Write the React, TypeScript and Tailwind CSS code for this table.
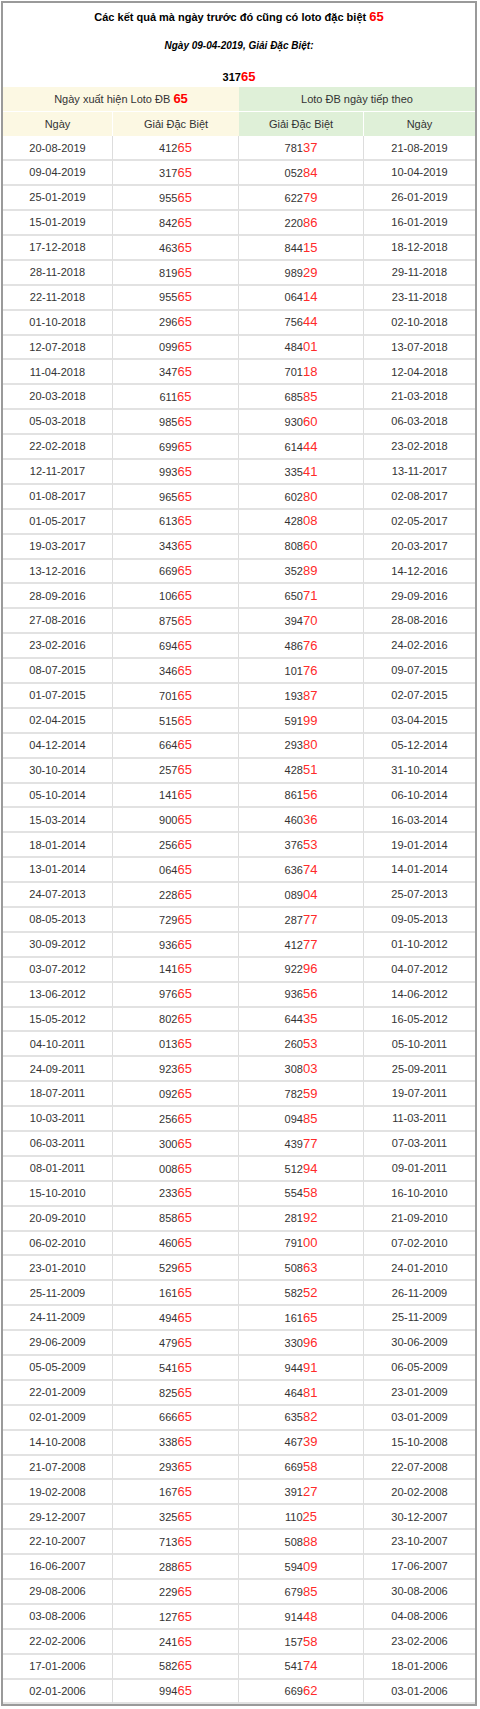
const rows: [string, string, string, string][] = [
  ["20-08-2019", "41265", "78137", "21-08-2019"],
  ["09-04-2019", "31765", "05284", "10-04-2019"],
  ["25-01-2019", "95565", "62279", "26-01-2019"],
  ["15-01-2019", "84265", "22086", "16-01-2019"],
  ["17-12-2018", "46365", "84415", "18-12-2018"],
  ["28-11-2018", "81965", "98929", "29-11-2018"],
  ["22-11-2018", "95565", "06414", "23-11-2018"],
  ["01-10-2018", "29665", "75644", "02-10-2018"],
  ["12-07-2018", "09965", "48401", "13-07-2018"],
  ["11-04-2018", "34765", "70118", "12-04-2018"],
  ["20-03-2018", "61165", "68585", "21-03-2018"],
  ["05-03-2018", "98565", "93060", "06-03-2018"],
  ["22-02-2018", "69965", "61444", "23-02-2018"],
  ["12-11-2017", "99365", "33541", "13-11-2017"],
  ["01-08-2017", "96565", "60280", "02-08-2017"],
  ["01-05-2017", "61365", "42808", "02-05-2017"],
  ["19-03-2017", "34365", "80860", "20-03-2017"],
  ["13-12-2016", "66965", "35289", "14-12-2016"],
  ["28-09-2016", "10665", "65071", "29-09-2016"],
  ["27-08-2016", "87565", "39470", "28-08-2016"],
  ["23-02-2016", "69465", "48676", "24-02-2016"],
  ["08-07-2015", "34665", "10176", "09-07-2015"],
  ["01-07-2015", "70165", "19387", "02-07-2015"],
  ["02-04-2015", "51565", "59199", "03-04-2015"],
  ["04-12-2014", "66465", "29380", "05-12-2014"],
  ["30-10-2014", "25765", "42851", "31-10-2014"],
  ["05-10-2014", "14165", "86156", "06-10-2014"],
  ["15-03-2014", "90065", "46036", "16-03-2014"],
  ["18-01-2014", "25665", "37653", "19-01-2014"],
  ["13-01-2014", "06465", "63674", "14-01-2014"],
  ["24-07-2013", "22865", "08904", "25-07-2013"],
  ["08-05-2013", "72965", "28777", "09-05-2013"],
  ["30-09-2012", "93665", "41277", "01-10-2012"],
  ["03-07-2012", "14165", "92296", "04-07-2012"],
  ["13-06-2012", "97665", "93656", "14-06-2012"],
  ["15-05-2012", "80265", "64435", "16-05-2012"],
  ["04-10-2011", "01365", "26053", "05-10-2011"],
  ["24-09-2011", "92365", "30803", "25-09-2011"],
  ["18-07-2011", "09265", "78259", "19-07-2011"],
  ["10-03-2011", "25665", "09485", "11-03-2011"],
  ["06-03-2011", "30065", "43977", "07-03-2011"],
  ["08-01-2011", "00865", "51294", "09-01-2011"],
  ["15-10-2010", "23365", "55458", "16-10-2010"],
  ["20-09-2010", "85865", "28192", "21-09-2010"],
  ["06-02-2010", "46065", "79100", "07-02-2010"],
  ["23-01-2010", "52965", "50863", "24-01-2010"],
  ["25-11-2009", "16165", "58252", "26-11-2009"],
  ["24-11-2009", "49465", "16165", "25-11-2009"],
  ["29-06-2009", "47965", "33096", "30-06-2009"],
  ["05-05-2009", "54165", "94491", "06-05-2009"],
  ["22-01-2009", "82565", "46481", "23-01-2009"],
  ["02-01-2009", "66665", "63582", "03-01-2009"],
  ["14-10-2008", "33865", "46739", "15-10-2008"],
  ["21-07-2008", "29365", "66958", "22-07-2008"],
  ["19-02-2008", "16765", "39127", "20-02-2008"],
  ["29-12-2007", "32565", "11025", "30-12-2007"],
  ["22-10-2007", "71365", "50888", "23-10-2007"],
  ["16-06-2007", "28865", "59409", "17-06-2007"],
  ["29-08-2006", "22965", "67985", "30-08-2006"],
  ["03-08-2006", "12765", "91448", "04-08-2006"],
  ["22-02-2006", "24165", "15758", "23-02-2006"],
  ["17-01-2006", "58265", "54174", "18-01-2006"],
  ["02-01-2006", "99465", "66962", "03-01-2006"],
];

function Prize({ value }: { value: string }) {
  return (
    <span>
      {value.slice(0, 3)}
      <span className="text-[13px] text-[#ff2a2a]">{value.slice(3)}</span>
    </span>
  );
}

const cell = "flex items-center justify-center border-b-2 border-[#e2e2e2]";

export default function App() {
  return (
    <div className="bg-white w-[480px] pt-[1px] pl-[1px]" style={{ fontFamily: '"Liberation Sans", Arial, sans-serif' }}>
      <div className="w-[476px] border-2 border-[#9a9a9a] text-[#333]">
        <div className="flex flex-col items-center h-[84px]">
          <div className="mt-[5px] h-[18px] flex items-center text-[11px] font-bold text-black">
            Các kết quả mà ngày trước đó cũng có loto đặc biệt&nbsp;
            <span className="text-[13px] text-[#ff0000]">65</span>
          </div>
          <div className="mt-[12px] text-[10px] font-bold italic text-black">Ngày 09-04-2019, Giải Đặc Biệt:</div>
          <div className="mt-[14px] flex items-center text-[11px] font-bold text-black">
            317<span className="text-[13px] text-[#ff0000]">65</span>
          </div>
        </div>

        <div className="grid grid-cols-[110px_126px_125px_111px] text-[11px]">
          <div className="col-span-2 h-[24.7px] flex items-center justify-center bg-[#fcf8e3] border-b border-white">
            Ngày xuất hiện Loto ĐB&nbsp;<span className="text-[13px] font-bold text-[#ff0000]">65</span>
          </div>
          <div className="col-span-2 h-[24.7px] flex items-center justify-center bg-[#dff0d8] border-b border-white">
            Loto ĐB ngày tiếp theo
          </div>
          <div className="h-[24.7px] flex items-center justify-center bg-[#fcf8e3] border-r border-white">Ngày</div>
          <div className="h-[24.7px] flex items-center justify-center bg-[#fcf8e3]">Giải Đặc Biệt</div>
          <div className="h-[24.7px] flex items-center justify-center bg-[#dff0d8] border-r border-white">Giải Đặc Biệt</div>
          <div className="h-[24.7px] flex items-center justify-center bg-[#dff0d8]">Ngày</div>

          {rows.map((r, i) => (
            <div key={i} className="contents">
              <div className={`${cell} h-[24.9px] border-r border-r-[#dddddd]`}>{r[0]}</div>
              <div className={`${cell} h-[24.9px] border-r border-r-[#dddddd]`}><Prize value={r[1]} /></div>
              <div className={`${cell} h-[24.9px] border-r border-r-[#dddddd]`}><Prize value={r[2]} /></div>
              <div className={`${cell} h-[24.9px]`}>{r[3]}</div>
            </div>
          ))}
        </div>
      </div>
    </div>
  );
}
